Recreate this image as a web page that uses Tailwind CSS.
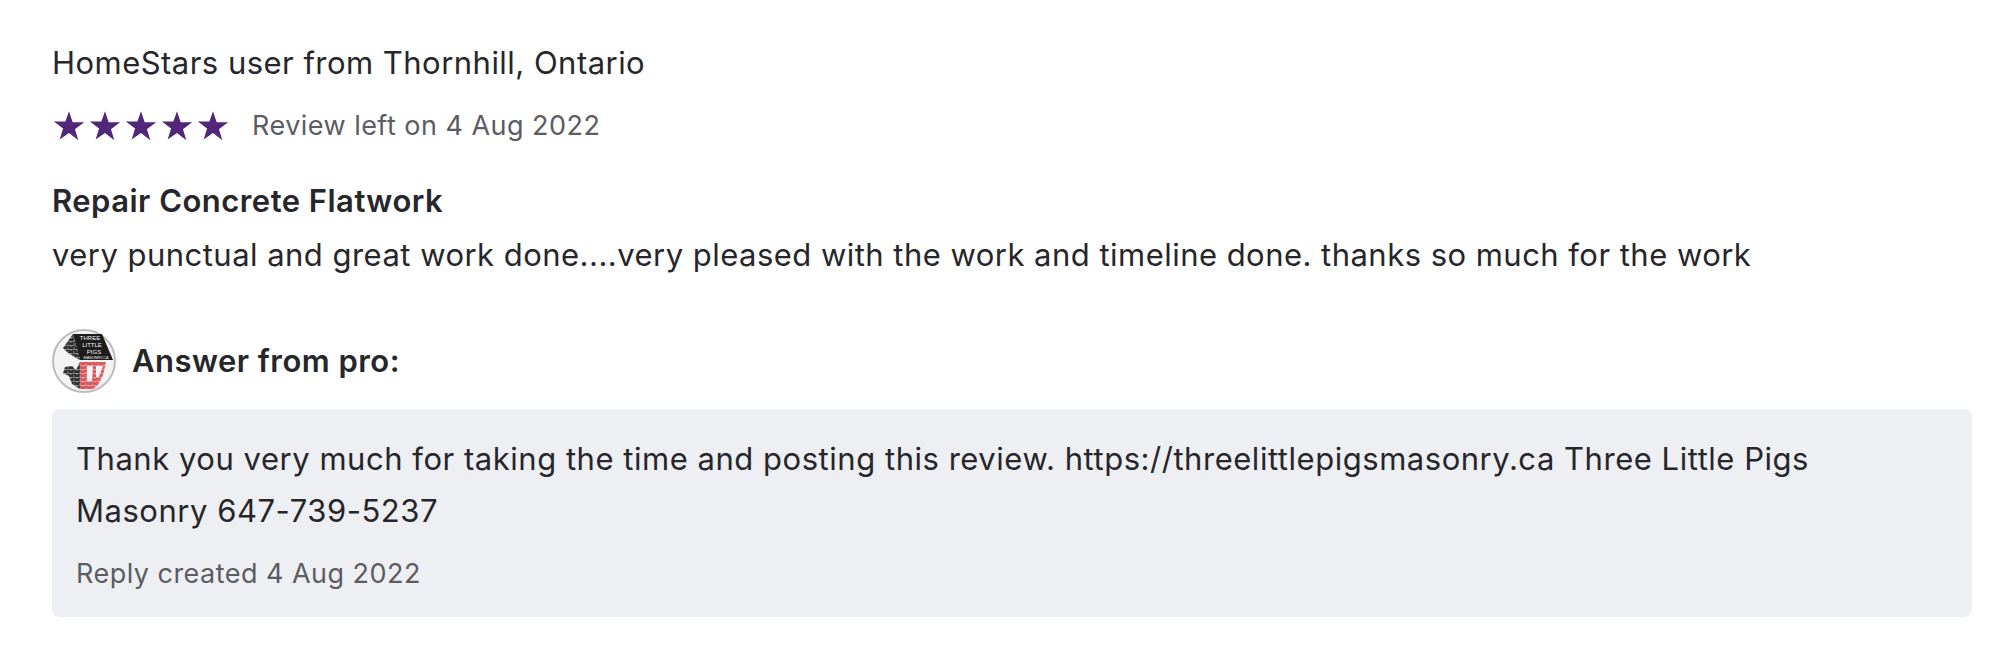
<!DOCTYPE html>
<html lang="en">
  <head>
    <meta charset="UTF-8" />
    <script src="https://cdn.jsdelivr.net/npm/@tailwindcss/browser@4"></script>
    <title>Review</title>
  </head>
  <body class="bg-white font-['Inter',sans-serif] text-[#26262b] tracking-[0.47px]">
    <div class="pl-[52px] pr-[28px] pt-[43px]">
      <p class="text-[31px] leading-[40px]">HomeStars user from Thornhill, Ontario</p>

      <div class="flex items-center mt-[23px] h-[40px]">
        <div class="flex gap-[2px]">
          <svg class="w-[34px] h-[34px]" viewBox="0 0 24 24" fill="#52277a"><path d="M12 1.6l2.6 7.7 8.1.1-6.5 4.9 2.4 7.8L12 17l-6.6 4.6 2.4-7.8-6.5-4.9 8.1-.1z" /></svg>
          <svg class="w-[34px] h-[34px]" viewBox="0 0 24 24" fill="#52277a"><path d="M12 1.6l2.6 7.7 8.1.1-6.5 4.9 2.4 7.8L12 17l-6.6 4.6 2.4-7.8-6.5-4.9 8.1-.1z" /></svg>
          <svg class="w-[34px] h-[34px]" viewBox="0 0 24 24" fill="#52277a"><path d="M12 1.6l2.6 7.7 8.1.1-6.5 4.9 2.4 7.8L12 17l-6.6 4.6 2.4-7.8-6.5-4.9 8.1-.1z" /></svg>
          <svg class="w-[34px] h-[34px]" viewBox="0 0 24 24" fill="#52277a"><path d="M12 1.6l2.6 7.7 8.1.1-6.5 4.9 2.4 7.8L12 17l-6.6 4.6 2.4-7.8-6.5-4.9 8.1-.1z" /></svg>
          <svg class="w-[34px] h-[34px]" viewBox="0 0 24 24" fill="#52277a"><path d="M12 1.6l2.6 7.7 8.1.1-6.5 4.9 2.4 7.8L12 17l-6.6 4.6 2.4-7.8-6.5-4.9 8.1-.1z" /></svg>
        </div>
        <span class="ml-[22px] text-[27px] text-[#5c5c63]">Review left on 4 Aug 2022</span>
      </div>

      <p class="mt-[35px] text-[31px] leading-[40px] font-semibold">Repair Concrete Flatwork</p>
      <p class="mt-[14px] text-[31px] leading-[40px]">very punctual and great work done....very pleased with the work and timeline done. thanks so much for the work</p>

      <div class="flex items-center mt-[54px] h-[64px]">
        <svg class="w-[64px] h-[64px]" viewBox="0 0 64 64">
          <defs>
            <pattern id="bricks" width="6" height="4" patternUnits="userSpaceOnUse">
              <path d="M0 .5H6M1 0V2M4 2V4" stroke="#fff" stroke-opacity=".55" stroke-width=".7" fill="none" />
            </pattern>
          </defs>
          <circle cx="32" cy="32" r="31" fill="#f3f3f3" stroke="#bcbcc2" stroke-width="2" />
          <path d="M21 5L11 19L16 24L26 30L28 31L21 5Z" fill="#2b2b2b" />
          <path d="M21 5H50L61 31H28Z" fill="#1d1d1d" />
          <path d="M13 38L20 37L24 41L28 33V60L20 55L17 47L11 44Z" fill="#2f2f2f" />
          <path d="M28 33H54L51 46L46 56L41 60H28Z" fill="#d8525a" />
          <path d="M11 19L21 5L28 31L16 24ZM13 38L20 37L24 41L28 33V60L20 55L17 47L11 44ZM28 33H54L51 46L46 56L41 60H28Z" fill="url(#bricks)" />
          <path d="M35 37H41L40 52H35ZM44 37H51L47 48H44Z" fill="#f3f3f3" />
          <g fill="#f2f2f2" font-family="Liberation Sans" text-anchor="middle" letter-spacing="0">
            <text x="38" y="11" font-size="6">THREE</text>
            <text x="40" y="18" font-size="6">LITTLE</text>
            <text x="42" y="25" font-size="6">PIGS</text>
            <text x="44" y="30" font-size="3.8">MASONRY.CA</text>
          </g>
        </svg>
        <span class="ml-[16px] text-[31px] font-semibold">Answer from pro:</span>
      </div>

      <div class="mt-[16px] h-[208px] rounded-[8px] bg-[#eeeff3] px-[24px] pt-[24px]">
        <p class="text-[31px] leading-[52px] max-w-[1820px] tracking-[0.53px]">Thank you very much for taking the time and posting this review. https://threelittlepigsmasonry.ca Three Little Pigs Masonry 647-739-5237</p>
        <p class="mt-[17px] text-[27px] leading-[40px] text-[#5c5c63]">Reply created 4 Aug 2022</p>
      </div>
    </div>
  </body>
</html>
